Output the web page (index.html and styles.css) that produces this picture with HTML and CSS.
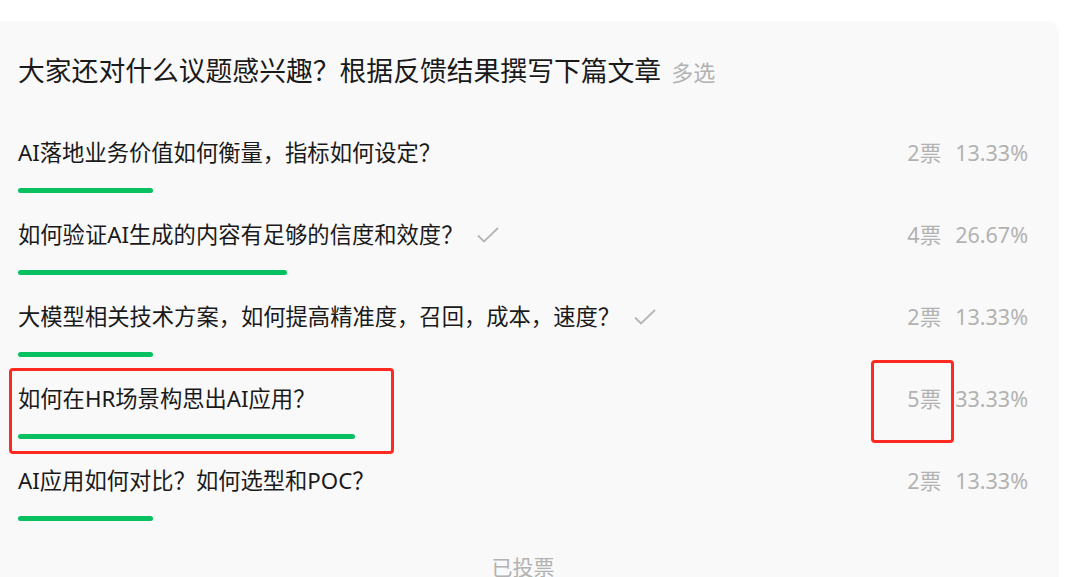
FILE: index.html
```html
<!DOCTYPE html>
<html lang="zh-CN">
<head>
<meta charset="utf-8">
<title>投票</title>
<link rel="stylesheet" href="styles.css">
</head>
<body>
<div class="page">
  <section class="card">
    <h1 class="title">大家还对什么议题感兴趣？根据反馈结果撰写下篇文章<span class="multi">多选</span></h1>
    <ul class="options">
      <li class="option">
        <div class="row">
          <span class="label">AI落地业务价值如何衡量，指标如何设定？</span>
          <span class="stats"><span class="votes">2票</span><span class="pct">13.33%</span></span>
        </div>
        <div class="track"><div class="bar" style="width:13.33%"></div></div>
      </li>
      <li class="option">
        <div class="row">
          <span class="label">如何验证AI生成的内容有足够的信度和效度？<svg class="check" viewBox="0 0 22 16" width="22" height="16"><path d="M1 8.5 L7 14.5 L21 1" fill="none" stroke="#b5b5b5" stroke-width="1.8"/></svg></span>
          <span class="stats"><span class="votes">4票</span><span class="pct">26.67%</span></span>
        </div>
        <div class="track"><div class="bar" style="width:26.67%"></div></div>
      </li>
      <li class="option">
        <div class="row">
          <span class="label">大模型相关技术方案，如何提高精准度，召回，成本，速度？<svg class="check" viewBox="0 0 22 16" width="22" height="16"><path d="M1 8.5 L7 14.5 L21 1" fill="none" stroke="#b5b5b5" stroke-width="1.8"/></svg></span>
          <span class="stats"><span class="votes">2票</span><span class="pct">13.33%</span></span>
        </div>
        <div class="track"><div class="bar" style="width:13.33%"></div></div>
      </li>
      <li class="option">
        <div class="row">
          <span class="label">如何在HR场景构思出AI应用？</span>
          <span class="stats"><span class="votes">5票</span><span class="pct">33.33%</span></span>
        </div>
        <div class="track"><div class="bar" style="width:33.33%"></div></div>
      </li>
      <li class="option">
        <div class="row">
          <span class="label">AI应用如何对比？如何选型和POC？</span>
          <span class="stats"><span class="votes">2票</span><span class="pct">13.33%</span></span>
        </div>
        <div class="track"><div class="bar" style="width:13.33%"></div></div>
      </li>
    </ul>
    <div class="voted">已投票</div>
    <div class="mark mark-option"></div>
    <div class="mark mark-votes"></div>
  </section>
</div>
</body>
</html>
```

FILE: styles.css
```css
* { box-sizing: border-box; }
html, body {
  margin: 0;
  padding: 0;
  background: #ffffff;
  font-family: "Noto Sans", "Noto Sans CJK SC", sans-serif;
  color: #1a1a1a;
  overflow: hidden;
}
.page {
  width: 1080px;
  height: 577px;
  overflow: hidden;
  padding-top: 21px;
  padding-right: 21px;
}
.card {
  position: relative;
  background: #f9f9f9;
  border-radius: 0 12px 0 0;
  padding: 32px 31px 0 18px;
  height: 600px;
}
.title {
  margin: 0;
  font-size: 26.8px;
  font-weight: 400;
  line-height: 36px;
  color: #1a1a1a;
  white-space: nowrap;
}
.multi {
  margin-left: 10px;
  font-size: 22px;
  color: #b2b2b2;
}
.options {
  list-style: none;
  margin: 48px 0 0;
  padding: 0;
}
.option {
  margin-bottom: 27px;
}
.row {
  display: flex;
  align-items: center;
  justify-content: space-between;
  height: 30px;
}
.label {
  display: flex;
  align-items: center;
  font-size: 22.3px;
  line-height: 30px;
  white-space: nowrap;
}
.check {
  margin-left: 14px;
  display: block;
}
.stats {
  display: flex;
  gap: 14px;
  font-size: 21.5px;
  color: #b2b2b2;
  line-height: 30px;
  white-space: nowrap;
}
.track {
  margin-top: 20px;
  height: 5px;
}
.bar {
  height: 5px;
  border-radius: 3px;
  background: #07c160;
}
.voted {
  margin-top: 31px;
  text-align: center;
  font-size: 21px;
  line-height: 30px;
  color: #b2b2b2;
}
.mark {
  position: absolute;
  border: 3.5px solid #ff2a1f;
  border-radius: 4px;
}
.mark-option {
  left: 9px;
  top: 347px;
  width: 385px;
  height: 86px;
}
.mark-votes {
  left: 871px;
  top: 339px;
  width: 83px;
  height: 83px;
}
```
